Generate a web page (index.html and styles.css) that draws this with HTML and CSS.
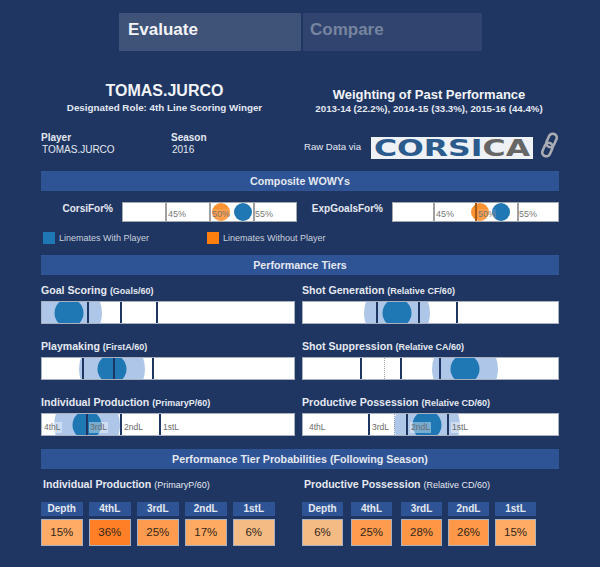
FILE: index.html
```html
<!DOCTYPE html>
<html lang="en">

<head>
    <meta charset="UTF-8">
    <meta name="viewport" content="width=device-width, initial-scale=1.0">
    <title>Player Evaluation</title>
    <link rel="stylesheet" href="styles.css">
</head>

<body>
<div class="tabs">
    <div class="tab tab-active">Evaluate</div>
    <div class="tab tab-second">Compare</div>
</div>

<div class="head">
    <div class="head-left">
        <div class="player-name">TOMAS.JURCO</div>
        <div class="player-role">Designated Role: 4th Line Scoring Winger</div>
    </div>
    <div class="head-right">
        <div class="weight-title">Weighting of Past Performance</div>
        <div class="weight-years">2013-14 (22.2%), 2014-15 (33.3%), 2015-16 (44.4%)</div>
    </div>
</div>

<div class="meta">
    <div class="filter">
        <div class="filter-name">Player</div>
        <div class="filter-value">TOMAS.JURCO</div>
    </div>
    <div class="filter">
        <div class="filter-name">Season</div>
        <div class="filter-value">2016</div>
    </div>
    <div class="raw-data">Raw Data via</div>
    <div class="logo"><span class="logo-text"><span class="logo-blue">CORSI</span>CA</span></div>
    <svg class="chain" width="19" height="26" viewBox="0 0 19 26">
        <g fill="none" stroke="#a9adb3" stroke-width="2.6" transform="rotate(24 9.5 13)">
            <rect x="5.5" y="1" width="8" height="14" rx="4"/>
            <rect x="5.5" y="11" width="8" height="14" rx="4"/>
        </g>
    </svg>
</div>

<div class="section">Composite WOWYs</div>

<div class="wowy-row">
    <div class="wowy-name wowy-first">CorsiFor%</div>
    <div class="wowy-bar wowy-bar-a">
        <div class="wowy-tick" style="left:42px"></div>
        <div class="wowy-tick" style="left:86px"></div>
        <div class="wowy-tick" style="left:130px"></div>
        <div class="wowy-dot dot-orange" style="left:98px"></div>
        <div class="wowy-dot dot-blue" style="left:120px"></div>
        <div class="wowy-label" style="left:45px">45%</div>
        <div class="wowy-label" style="left:89px">50%</div>
        <div class="wowy-label" style="left:132px">55%</div>
    </div>
    <div class="wowy-name wowy-second">ExpGoalsFor%</div>
    <div class="wowy-bar wowy-bar-b">
        <div class="wowy-dot dot-orange" style="left:87px"></div>
        <div class="wowy-dot dot-blue" style="left:108px"></div>
        <div class="wowy-tick" style="left:40px"></div>
        <div class="wowy-tick wowy-tick-over" style="left:82px"></div>
        <div class="wowy-tick" style="left:124px"></div>
        <div class="wowy-label" style="left:43px">45%</div>
        <div class="wowy-label" style="left:85px">50%</div>
        <div class="wowy-label" style="left:126px">55%</div>
    </div>
</div>

<div class="legend">
    <div class="legend-item legend-with"><span class="swatch swatch-blue"></span>Linemates With Player</div>
    <div class="legend-item"><span class="swatch swatch-orange"></span>Linemates Without Player</div>
</div>

<div class="section section-tiers">Performance Tiers</div>

<div class="tiers">
    <div class="tier">
        <div class="tier-name">Goal Scoring <small>(Goals/60)</small></div>
        <div class="tier-bar">
            <div class="halo" style="left:27px"></div>
            <div class="core" style="left:27px"></div>
            <div class="tick" style="left:45px"></div>
            <div class="tick" style="left:78px"></div>
            <div class="tick" style="left:114px"></div>
        </div>
    </div>
    <div class="tier">
        <div class="tier-name">Shot Generation <small>(Relative CF/60)</small></div>
        <div class="tier-bar">
            <div class="halo" style="left:94px"></div>
            <div class="core" style="left:94px"></div>
            <div class="tick" style="left:73px"></div>
            <div class="tick" style="left:115px"></div>
            <div class="tick" style="left:153px"></div>
        </div>
    </div>
    <div class="tier">
        <div class="tier-name">Playmaking <small>(FirstA/60)</small></div>
        <div class="tier-bar">
            <div class="halo" style="left:70px"></div>
            <div class="core" style="left:70px"></div>
            <div class="tick" style="left:40px"></div>
            <div class="tick" style="left:71px"></div>
            <div class="tick" style="left:110px"></div>
        </div>
    </div>
    <div class="tier">
        <div class="tier-name">Shot Suppression <small>(Relative CA/60)</small></div>
        <div class="tier-bar">
            <div class="halo" style="left:162px"></div>
            <div class="core" style="left:162px"></div>
            <div class="tick" style="left:57px"></div>
            <div class="tick-dotted" style="left:81px"></div>
            <div class="tick" style="left:97px"></div>
            <div class="tick" style="left:136px"></div>
        </div>
    </div>
    <div class="tier">
        <div class="tier-name">Individual Production <small>(PrimaryP/60)</small></div>
        <div class="tier-bar">
            <div class="halo" style="left:45px"></div>
            <div class="core" style="left:45px"></div>
            <div class="tick" style="left:44px"></div>
            <div class="tick" style="left:78px"></div>
            <div class="tick" style="left:117px"></div>
            <div class="tier-label" style="left:1px">4thL</div>
            <div class="tier-label" style="left:47px">3rdL</div>
            <div class="tier-label" style="left:81px">2ndL</div>
            <div class="tier-label" style="left:120px">1stL</div>
        </div>
    </div>
    <div class="tier">
        <div class="tier-name">Productive Possession <small>(Relative CD/60)</small></div>
        <div class="tier-bar">
            <div class="halo" style="left:124px"></div>
            <div class="core" style="left:124px"></div>
            <div class="tick" style="left:65px"></div>
            <div class="tick-dotted" style="left:91px"></div>
            <div class="tick" style="left:103px"></div>
            <div class="tick" style="left:144px"></div>
            <div class="tier-label" style="left:5px">4thL</div>
            <div class="tier-label" style="left:68px">3rdL</div>
            <div class="tier-label" style="left:107px">2ndL</div>
            <div class="tier-label" style="left:148px">1stL</div>
        </div>
    </div>
</div>

<div class="section section-probs">Performance Tier Probabilities (Following Season)</div>

<div class="probs">
    <div class="prob-block">
        <div class="prob-name">Individual Production <small>(PrimaryP/60)</small></div>
        <div class="prob-grid prob-grid-left">
            <div class="prob-col">
                <div class="prob-head">Depth</div>
                <div class="prob-cell" style="background:#ffab65">15%</div>
            </div>
            <div class="prob-col">
                <div class="prob-head">4thL</div>
                <div class="prob-cell" style="background:#ff7f27">36%</div>
            </div>
            <div class="prob-col">
                <div class="prob-head">3rdL</div>
                <div class="prob-cell" style="background:#ff9b4e">25%</div>
            </div>
            <div class="prob-col">
                <div class="prob-head">2ndL</div>
                <div class="prob-cell" style="background:#ffaa62">17%</div>
            </div>
            <div class="prob-col">
                <div class="prob-head">1stL</div>
                <div class="prob-cell" style="background:#f4bb85">6%</div>
            </div>
        </div>
    </div>
    <div class="prob-block">
        <div class="prob-name prob-name-right">Productive Possession <small>(Relative CD/60)</small></div>
        <div class="prob-grid">
            <div class="prob-col">
                <div class="prob-head">Depth</div>
                <div class="prob-cell" style="background:#f4bb85">6%</div>
            </div>
            <div class="prob-col prob-col-shift2">
                <div class="prob-head">4thL</div>
                <div class="prob-cell" style="background:#ff9b4e">25%</div>
            </div>
            <div class="prob-col prob-col-shift3">
                <div class="prob-head">3rdL</div>
                <div class="prob-cell" style="background:#ff9646">28%</div>
            </div>
            <div class="prob-col">
                <div class="prob-head">2ndL</div>
                <div class="prob-cell" style="background:#ff9848">26%</div>
            </div>
            <div class="prob-col">
                <div class="prob-head">1stL</div>
                <div class="prob-cell" style="background:#ffab65">15%</div>
            </div>
        </div>
    </div>
</div>
</body>

</html>
```

FILE: styles.css
```css
body {
    margin: 0;
    padding: 13px 41px 0;
    height: 554px;
    overflow: hidden;
    background-color: #1f3663;
    color: #e4e8f0;
    font-family: "Liberation Sans", Arial, sans-serif;
}

/* tabs */
.tabs {
    display: flex;
    gap: 2px;
    padding-left: 78px;
}

.tab {
    width: 182px;
    height: 38px;
    padding-left: 9px;
    box-sizing: border-box;
    background-color: #30446f;
    color: #77849f;
    font-size: 17px;
    font-weight: bold;
    line-height: 33px;
}

.tab-active {
    background-color: #3f5378;
    color: #f2f4f8;
}

.tab-second {
    width: 179px;
    padding-left: 7px;
}

/* header */
.head {
    display: grid;
    grid-template-columns: 247px 282px;
    margin-top: 30px;
    text-align: center;
    font-weight: bold;
}

.player-name {
    font-size: 16px;
    line-height: 20px;
    color: #f2f4f8;
}

.player-role {
    margin-top: 1px;
    font-size: 9.8px;
    line-height: 12px;
}

.head-right {
    padding-top: 6px;
}

.weight-title {
    font-size: 13px;
    line-height: 16px;
    color: #f2f4f8;
}

.weight-years {
    font-size: 9.7px;
    line-height: 12px;
}

.meta {
    display: flex;
    align-items: flex-start;
    height: 29px;
    margin-top: 16px;
    font-size: 10px;
}

.filter {
    width: 130px;
    padding-top: 1px;
    line-height: 12px;
}

.filter-name {
    font-weight: bold;
}

.filter-value {
    padding-left: 1px;
}

.raw-data {
    width: 67px;
    margin-left: 3px;
    padding-top: 10px;
    font-size: 9.6px;
    line-height: 12px;
}

.logo {
    width: 162px;
    height: 22px;
    margin-top: 6px;
    background-color: #eef1f6;
    text-align: center;
}

.logo-text {
    display: inline-block;
    color: #666666;
    font-family: "DejaVu Sans", sans-serif;
    font-size: 23px;
    font-weight: bold;
    line-height: 22px;
    transform: scaleX(1.37);
}

.logo-blue {
    color: #2a5b8c;
}

.chain {
    margin-left: 7px;
    margin-top: 1px;
}

/* section bars */
.section {
    height: 20px;
    margin-top: 11px;
    background-color: #2f5496;
    color: #e4e8f0;
    font-size: 10.7px;
    font-weight: bold;
    line-height: 20px;
    text-align: center;
}

.section-probs {
    margin-top: 13px;
}

/* wowy */
.wowy-row {
    display: flex;
    align-items: stretch;
    height: 20px;
    margin-top: 11px;
}

.wowy-name {
    box-sizing: border-box;
    padding-right: 9px;
    font-size: 10px;
    font-weight: bold;
    line-height: 14px;
    text-align: right;
}

.wowy-first {
    width: 81px;
}

.wowy-second {
    width: 95px;
}

.wowy-bar {
    position: relative;
    box-sizing: border-box;
    overflow: hidden;
    background-color: #ffffff;
    border: 1px solid #a3a7ae;
}

.wowy-bar-a {
    width: 175px;
}

.wowy-bar-b {
    width: 167px;
}

.wowy-tick {
    position: absolute;
    top: 0;
    bottom: 0;
    width: 1.5px;
    background-color: #a0a0a0;
}

.wowy-tick-over {
    background-color: #a85a18;
}

.wowy-label {
    position: absolute;
    bottom: 1px;
    background-color: rgba(255, 255, 255, 0.12);
    color: #777777;
    font-size: 9px;
    line-height: 11px;
}

.wowy-dot {
    position: absolute;
    top: 50%;
    width: 18px;
    height: 18px;
    border-radius: 50%;
    transform: translate(-50%, -50%);
}

.dot-orange {
    background-color: rgba(255, 127, 14, 0.85);
}

.dot-blue {
    background-color: #1f77b4;
}

/* legend */
.legend {
    display: flex;
    align-items: center;
    height: 12px;
    margin-top: 10px;
    padding-left: 2px;
    font-size: 9px;
    color: #c9d0dd;
}

.legend-item {
    display: flex;
    align-items: center;
    gap: 4px;
}

.legend-with {
    width: 164px;
}

.swatch {
    width: 12px;
    height: 12px;
}

.swatch-blue {
    background-color: #1f77b4;
}

.swatch-orange {
    background-color: #ff7f0e;
}

/* tiers */
.tiers {
    display: grid;
    grid-template-columns: 254px 257px;
    column-gap: 7px;
    row-gap: 16px;
    margin-top: 9px;
}

.tier-name {
    height: 17px;
    font-size: 10.6px;
    font-weight: bold;
    line-height: 13px;
    color: #e4e8f0;
}

small {
    font-size: 9px;
}

.tier-bar {
    position: relative;
    box-sizing: border-box;
    height: 23px;
    overflow: hidden;
    background-color: #ffffff;
    border: 1px solid #a9b1c0;
}

.halo,
.core {
    position: absolute;
    top: 50%;
    border-radius: 50%;
    transform: translate(-50%, -50%);
}

.halo {
    width: 66px;
    height: 66px;
    background-color: #aec6e8;
}

.core {
    width: 29px;
    height: 29px;
    background-color: #1f77b4;
}

.tick,
.tick-dotted {
    position: absolute;
    top: 0;
    bottom: 0;
}

.tick {
    width: 2px;
    background-color: #1f3663;
}

.tick-dotted {
    border-left: 1px dotted #9aa0aa;
}

.tier-label {
    position: absolute;
    bottom: 2px;
    padding: 0 1px;
    background-color: rgba(255, 255, 255, 0.4);
    color: #6a6a6a;
    font-size: 8.5px;
    line-height: 11px;
}

/* probabilities */
.probs {
    display: grid;
    grid-template-columns: 261px 257px;
    margin-top: 8px;
}

.prob-name {
    height: 25px;
    padding-left: 2px;
    font-size: 10.6px;
    font-weight: bold;
    line-height: 14px;
}

.prob-name small {
    font-weight: normal;
}

.prob-name-right {
    padding-left: 2px;
}

.prob-grid {
    display: flex;
    gap: 6px;
}

.prob-grid-left {
    gap: 6.5px;
}

.prob-col {
    width: 41px;
}

.prob-grid-left .prob-col {
    width: 41.5px;
}

.prob-col-shift2 {
    margin-left: 2px;
}

.prob-col-shift3 {
    margin-left: 3px;
}

.prob-head {
    height: 14px;
    margin-bottom: 3px;
    background-color: #2f5496;
    font-size: 10px;
    font-weight: bold;
    line-height: 14px;
    text-align: center;
}

.prob-cell {
    box-sizing: border-box;
    height: 27px;
    border: 1px solid #a9b1c0;
    color: #33261a;
    font-size: 11.5px;
    line-height: 25px;
    text-align: center;
}
```
